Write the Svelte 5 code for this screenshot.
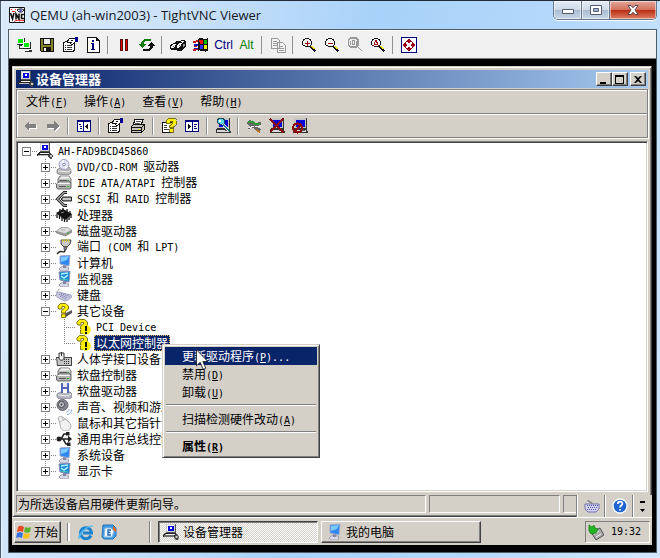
<script>
  const vncTools = [
    ['newconn', 'save', 'options', 'info'],
    ['pause', 'refresh'],
    ['cad', 'winkey', 'Ctrl', 'Alt'],
    ['copy'],
    ['zoomin', 'zoomout', 'zoom100', 'zoomauto'],
    ['fullscreen']
  ];
  const mmcTools = [
    ['back', 'forward'],
    ['treepane'],
    ['options', 'print'],
    ['help', 'actionpane'],
    ['scan'],
    ['update', 'uninstall', 'disable']
  ];
  const menus = [
    ['文件', 'F'],
    ['操作', 'A'],
    ['查看', 'V'],
    ['帮助', 'H']
  ];
  const devices = [
    { icon: 'cd', text: 'DVD/CD-ROM 驱动器' },
    { icon: 'drives', text: 'IDE ATA/ATAPI 控制器' },
    { icon: 'scsi', text: 'SCSI 和 RAID 控制器' },
    { icon: 'cpu', text: '处理器' },
    { icon: 'disk', text: '磁盘驱动器' },
    { icon: 'port', text: '端口 (COM 和 LPT)' },
    { icon: 'screen', text: '计算机' },
    { icon: 'display', text: '监视器' },
    { icon: 'keyboard', text: '键盘' },
    {
      icon: 'unknown',
      text: '其它设备',
      children: [
        { icon: 'problem', text: 'PCI Device' },
        { icon: 'problem', text: '以太网控制器', selected: true }
      ]
    },
    { icon: 'hid', text: '人体学接口设备' },
    { icon: 'drives', text: '软盘控制器' },
    { icon: 'floppy', text: '软盘驱动器' },
    { icon: 'sound', text: '声音、视频和游戏控制器' },
    { icon: 'mouse', text: '鼠标和其它指针设备' },
    { icon: 'usb', text: '通用串行总线控制器' },
    { icon: 'screen', text: '系统设备' },
    { icon: 'display', text: '显示卡' }
  ];
  const actions = [
    { text: '更新驱动程序', key: 'P', more: '...', active: true },
    { text: '禁用', key: 'D' },
    { text: '卸载', key: 'U' },
    null,
    { text: '扫描检测硬件改动', key: 'A' },
    null,
    { text: '属性', key: 'R', bold: true }
  ];

  // Latin runs take a half-width face, as in a Chinese bitmap font
  const runs = (s) => s.match(/[\x20-\x7e]+|[^\x20-\x7e]+/g) ?? [];
  const isLatin = (s) => s.charCodeAt(0) < 127;

  const lens = '<path d="M4 1h4v1h2v2h1v4h-1v1H8v1H4V9H2V8H1V4h1V2h2z" fill="#111"/><path d="M4 2h4v1h1v1h1v4H9v1H4V8H2V4h1V3h1z" fill="#f6f6f6"/><path d="M9 9l5.500 5.500" stroke="#111" stroke-width="2.800"/><path d="M10.500 9l3 3" stroke="#e8e000" stroke-width="1.400"/>';
  const pc = '<path d="M3 0h10v9H3z" fill="#555"/><path d="M3 0h9v8H3z" fill="#d0d0d0"/><path d="M4 1h7v6H4z" fill="#fff"/><path d="M5 2h6v5H5z" fill="#0000e0"/><path d="M7 3h2v2H7z" fill="#fff"/><path d="M2 9h11l1 4H0v-2z" fill="#222"/><path d="M3 10h9l1 1H2z" fill="#f4f4f4"/><path d="M1 12h10" stroke="#bbb"/><path d="M12 10h2l2 3-1 3h-2l-2-2z" fill="#444"/><path d="M12.500 12h2v2h-2z" fill="#ccc"/>';
  const pcBig = '<path d="M2 0h13v11H2z" fill="#333"/><path d="M2 0h12v10H2z" fill="#c4c4c4"/><path d="M4 2h9v7H4z" fill="#0000d8"/><path d="M1 11h14l1 4H1z" fill="#333"/><path d="M2 12h12v2H2z" fill="#d8d8d8"/><path d="M10 12h3v1h-3z" fill="#555"/>';
  const screenBase = '<path d="M5 12l4-1 4 2-1 3H5l-2-2z" fill="#d8d8e4" stroke="#8a8aa2" stroke-width=".7"/><path d="M7 10h3v3H7z" fill="#8686a8"/>';
  const drives = '<path d="M4 1h9l2 3v4H2V4z" fill="#c4c4c4" stroke="#777"/><path d="M5 1.500h8l1 2H4z" fill="#f4f4f4"/><path d="M2 8l1-2h10l2 2v5l-1 1H2L.500 13V9z" fill="#b4b4b4" stroke="#666"/><path d="M2 8h11l1 1H1z" fill="#f6f6f6"/><path d="M4 5.500h7M3 11.500h7" stroke="#555"/><path d="M12 5h1v1h-1zM11 11h2v1h-2z" fill="#19b519"/>';
  const qmark = '<path d="M2 5V3l2.500-2.500h5L12.500 3v3.200L9.500 8.500V10h-4V7.500L8.500 5V3.500H6V6H3z" fill="#ffee00" stroke="#605800" stroke-width=".8"/><path d="M5.500 11h4v3.500h-4z" fill="#ffee00" stroke="#605800" stroke-width=".8"/>';

  const icons = {
    vnc: '<path d="M.5.5h15v15H.5z" fill="#fff" stroke="#111"/><path d="M8 3l2-1h3l2 1-2 2h-3z" fill="#fff" stroke="#111"/><path d="M10.500 2.500h2v2h-2z" fill="#2030c0"/><path d="M2 2h1v1H2zM6 2h1v1H6zM3 4h3v1H3z" fill="#e22"/><path d="M1.500 6l2 6 1.500-6M7 12.500V7l3 5V6.500M15 7.500h-2.500v4H15" fill="none" stroke="#111" stroke-width="1.600"/><path d="M5 14.500c2-2 6-1 10-1" stroke="#e22" fill="none"/>',
    newconn: '<path d="M1 1h8v7H1z" fill="#222"/><path d="M1 1h7v6H1z" fill="#fff"/><path d="M2 2h5v4H2z" fill="#00e800"/><path d="M7 5h8v7H7z" fill="#222"/><path d="M7 5h7v6H7z" fill="#fff"/><path d="M8 6h5v4H8z" fill="#00e800"/><path d="M3 8h3v1H3zM3 11h4v1H3zM3 9h1v2H3zM9 13h7v2H9z" fill="#333"/><path d="M8 13h5v1H8z" fill="#eee"/>',
    save: '<path d="M1 1h14v14H2l-1-1z" fill="#111"/><path d="M2 2h12v12H2z" fill="#84842a"/><path d="M4 1h8v7H4z" fill="#111"/><path d="M5 2h6v5H5z" fill="#eee"/><path d="M4 10h8v4H4z" fill="#111"/><path d="M5 11h2v3H5z" fill="#fff"/>',
    options: '<path d="M1 5h2V4h10v10h-1v1H1z" fill="#111"/><path d="M2 6h1V5h9v8h-1v1H2z" fill="#fff"/><path d="M3 8h1M5 8h5M3 10h1M5 10h5M3 12h1M5 12h5" stroke="#333"/><path d="M5 5l2-3 3-1h3v4l-3 3-2-2z" fill="#fff" stroke="#111"/><path d="M9 3h2M8 5h2" stroke="#111"/><path d="M13 0h3v5h-3z" fill="#000090"/>',
    info: '<path d="M2 0h9l4 4v12H2z" fill="#111"/><path d="M3 1h8v3h3v11H3z" fill="#fff"/><path d="M7 3h2v2H7zM6 6h3v6h1v1H6v-1h1V7H6z" fill="#00007c"/>',
    pause: '<path d="M4 2h3v12H4zM9 2h3v12H9z" fill="#501010"/><path d="M5 3h1v10H5zM10 3h1v10h-1z" fill="#f00000"/><path d="M4.600 3h1.400v10H4.600zM9.600 3H11v10H9.600z" fill="#f00000"/>',
    refresh: '<path d="M12 3H6L3.500 5.500V8" stroke="#127a12" stroke-width="2.200" fill="none"/><path d="M0 7h7l-3.500 4z" fill="#127a12"/><path d="M4 13h6l2.500-2.500V8" stroke="#111" stroke-width="2.200" fill="none"/><path d="M9 9h7l-3.500-4z" fill="#111"/>',
    cad: '<path d="M0 9l1-2 3-1 2-2h4l1-1h3l2 2v4l-3 4-2 1H8l-2-1H2l-2-1z" fill="#111"/><path d="M1 9l2-2h3l-1 3-2 1H1zM7 8l2-2h3l-2 4-2 1H7zM11 4h3l-1 2-2-1z" fill="#f4f4f4"/><path d="M2.500 9h1.500M8.500 8.500h1.500" stroke="#555"/><path d="M13 7h2v2h-1l-1 2z" fill="#999"/>',
    winkey: '<path d="M0 4h3v2H0zM1 9h3v1H1zM0 12h3v2H0zM3 3h3v2H3zM3 12h3v1H3z" fill="#c01414"/><path d="M1 7h4v2H1zM1 11h4v1H1z" fill="#1414c0"/><path d="M5 2c3-2 6 1 10-1v13c-4 2-7-2-10 0z" fill="#111"/><path d="M6 3l4-.5v4L7 7z" fill="#e11"/><path d="M11 3.500l3-.5v4h-3z" fill="#0b0"/><path d="M7 8l3 .5V12l-3-.5z" fill="#33f"/><path d="M11 8h3v4l-3 .3z" fill="#ee0"/>',
    copy: '<path d="M1.500 1.500h6l2 2v8h-8zM7.500 5.500h5l3 3v7h-8z" fill="#f4f4f4" stroke="#999"/><path d="M3 4.500h4M3 6.500h4M3 8.500h4M9 9.500h4M9 11.500h5M9 13.500h5" stroke="#999"/>',
    zoomin: lens + '<path d="M3.500 6h5M6 3.500v5" stroke="#a00018"/>',
    zoomout: lens + '<path d="M3.500 6h5" stroke="#a00018"/>',
    zoom100: '<path d="M4 1h5l2 2v5l-2 2H4L1.500 8V3z" fill="#eee" stroke="#999" stroke-width="1.500"/><path d="M3.500 3.500v4M5.500 3.500h2v4h-2zM9.500 3.500v4M10 9l5 5" stroke="#999" fill="none" stroke-width="1.200"/>',
    zoomauto: lens + '<path d="M3.500 9l2.500-6 2.500 6M4 7h4" stroke="#a00018" fill="none"/>',
    fullscreen: '<path d="M0 0h16v16H0z" fill="#000080"/><path d="M1 1h14v14H1z" fill="#fff"/><path d="M8 1.500L11 5H9v2H7V5H5zM8 14.500L5 11h2V9h2v2h2zM1.500 8L5 5v2h1v2H5v2zM14.500 8L11 11V9h-1V7h1V5z" fill="#a00018"/><path d="M7 6h2v4H7z" fill="#fff"/>',
    back: '<path d="M3 9l5-5v3h7v4H8v3z" fill="#fff"/><path d="M2 8l5-5v3h7v4H7v3z" fill="#808080"/>',
    forward: '<path d="M15 9l-5-5v3H3v4h7v3z" fill="#fff"/><path d="M14 8L9 3v3H2v4h7v3z" fill="#808080"/>',
    treepane: '<path d="M1 2h14v12H1z" fill="#000080"/><path d="M2 4h5v9H2zM8 4h6v9H8z" fill="#fff"/><path d="M3 6.500h2M4 8.500h2M4 10.500h2" stroke="#000080"/><path d="M12 5v7L9 8.500z" fill="#111"/>',
    actionpane: '<path d="M1 2h14v12H1z" fill="#000080"/><path d="M2 4h6v9H2zM9 4h5v9H9z" fill="#fff"/><path d="M10 6.500h3M10 8.500h2M10 10.500h3" stroke="#000080"/><path d="M4 5v7l3-3.500z" fill="#111"/>',
    print: '<path d="M5 1.500h8l-2 6H3z" fill="#fff" stroke="#111"/><path d="M6 3.500h5M5 5.500h5" stroke="#555"/><path d="M1.500 8.500l2-2h11v5l-3 3h-10z" fill="#c6c3b8" stroke="#111"/><path d="M1.500 9.500h10l3-3M11.500 9.500V14M2 12h9" stroke="#111" fill="none"/><path d="M8 11h2v1H8z" fill="#dd0"/>',
    help: '<path d="M1 4h10v11H1z" fill="#111"/><path d="M2 5h8v9H2z" fill="#fff"/><path d="M3 7.500h3M3 9.500h3M3 11.500h5" stroke="#444"/><g transform="translate(3 -.5)">' + qmark + '</g>',
    scan: pcBig + '<path d="M2 2l3-2h3l2 3-1 3-3 1-3-2z" fill="#58d8e8" stroke="#245"/><path d="M4 2h2v2H4z" fill="#fff"/><path d="M8 6l6 7" stroke="#fff" stroke-width="2.600"/><path d="M8.500 6.500l6 7" stroke="#0a7c90" stroke-width="1.400"/>',
    update: '<path d="M0 5l4-3 4 3 7-1v3l-5 1 5 3-2 3-6-4-6 1 3-3z" fill="#666"/><path d="M2 4l4-.5L9 6h5" stroke="#2a9a38" stroke-width="2" fill="none"/><path d="M9 8h6M3 10l5-2" stroke="#eee"/><path d="M10 12l4 2" stroke="#b87020" stroke-width="2"/>',
    uninstall: pcBig + '<path d="M1 1l14 14M14 1L1 14" stroke="#8b0c10" stroke-width="2.600"/>',
    disable: pcBig + '<circle cx="5.500" cy="10" r="4.500" fill="none" stroke="#8b0c10" stroke-width="2.200"/><path d="M3 13l6-6" stroke="#8b0c10" stroke-width="2"/>',
    pc,
    cd: '<path d="M1 11l4-3h8l2 3v3l-3 2H4l-3-2z" fill="#b5b5b5" stroke="#777" stroke-width=".8"/><path d="M2 12l10 1 3-2" stroke="#eee" fill="none"/><circle cx="8" cy="5.500" r="5" fill="#dfe1fa" stroke="#9b9bb4"/><path d="M8 5.500L5 2l3-1zM8 5.500l4 3-3 1.500z" fill="#fff"/><circle cx="8" cy="5.500" r="1.300" fill="#fff" stroke="#88a"/>',
    drives,
    scsi: '<path d="M11 1.500H8L1.500 8 8 14.500h3" fill="none" stroke="#222" stroke-width="3"/><path d="M11 1.500H8L1.500 8 8 14.500h3" fill="none" stroke="#aaa" stroke-width="1.200"/><path d="M7 6h8.500v4H7L5 8z" fill="#888" stroke="#222"/><path d="M7 8h8" stroke="#fff"/>',
    cpu: '<path d="M0 6l7-4 9 5-7 6z" fill="#111"/><path d="M1 7v4M3.500 8v4M6 9v5M8.500 12v3M11 10v5M13 8v5M15 7v4M4 2v3M7 1v3M11 2v3M14 4v3" stroke="#111" stroke-width="1.300"/><path d="M5 6l3-1" stroke="#888"/>',
    disk: '<path d="M.500 8l5-3.500h6l4 2.500v2.500l-6 3.500-9-3z" fill="#999" stroke="#777" stroke-width=".7"/><path d="M.800 8l5-3.300h6L15 7l-6 3.300z" fill="#dedede"/><path d="M5 7h4" stroke="#aaa"/><path d="M11 10h2" stroke="#3b3"/>',
    port: '<path d="M5 1h10l-1 4-3 3H8L5 5z" fill="#c9c9c9" stroke="#444"/><path d="M6 1.500h8" stroke="#e4d000" stroke-width="2" stroke-dasharray="1 1"/><path d="M8 8h3l-1 3H8z" fill="#888" stroke="#333" stroke-width=".7"/><path d="M9 11c0 4-4 0-6 2l-2 2" stroke="#222" stroke-width="1.400" fill="none"/>',
    screen: screenBase + '<path d="M4 1l10-1-1 11-9-2z" fill="#2e87ec" stroke="#a3a8ce"/><path d="M5 2l8-1-2 4-6 2z" fill="#7bcaff"/>',
    display: screenBase + '<path d="M3 1l11-1-1 11-9-2z" fill="#168bd6" stroke="#888bae"/><path d="M5 3l7-1M5 5l3 2 4-3" stroke="#b9f2ff" fill="none" stroke-width="1.500"/><path d="M5 8l7 1" stroke="#44c8c0"/>',
    keyboard: '<path d="M0 6l3-1 12 3 1 2-4 3-4 1-7-4z" fill="#c8c8e2" stroke="#8a8aae" stroke-width=".7"/><path d="M3 7l9 4M5 6.500l9 3M4 9l6 3" stroke="#6a6aa0" stroke-dasharray="1 1"/><path d="M1 5c0-2 2-1 2-3" stroke="#aaa" fill="none"/>',
    unknown: '<path d="M8 11l8-4v3l-3 2-3 2-3-1z" fill="#555"/>' + qmark,
    problem: qmark + '<circle cx="11" cy="11" r="4.800" fill="#ffee00"/><path d="M10 7h2v5h-2zM10 13h2v2h-2z" fill="#111"/>',
    hid: '<path d="M0 6h16v9H1z" fill="#444"/><path d="M1 7h14v7H2z" fill="#c4c4c4"/><path d="M8 8.500h6M8 10.500h6M8 12.500h6" stroke="#333" stroke-dasharray="1 1"/><path d="M3 2v5c0 3 5 3 5 0V2z" fill="#eee" stroke="#333"/><path d="M5.500 1v4" stroke="#333"/>',
    floppy: '<path d="M1 11l4-2h9l2 2v3l-3 2H3l-2-2z" fill="#b5b5c2" stroke="#778" stroke-width=".8"/><path d="M5 0h8v10H5z" fill="#5267b8"/><path d="M7 0h4v4H7z" fill="#e8e8f4"/><path d="M7 6h4v4H7z" fill="#fff"/><path d="M2 12l10 1 3-2" stroke="#eee" fill="none"/>',
    sound: '<circle cx="6.500" cy="6" r="5.500" fill="#85858e" stroke="#66666e"/><circle cx="5.500" cy="5.500" r="3" fill="#c8c8d0" stroke="#44444c"/><circle cx="5.500" cy="5.500" r="1" fill="#333"/><path d="M10 13c2 0 3-1 3-3M11 15.500c3 0 4.500-2 4.500-5" stroke="#90a8e8" fill="none"/>',
    mouse: '<path d="M2 3c1-2 4-2 6 0l5 4c4 4 1 9-3 9S4 13 4 9z" fill="#f1f1f1" stroke="#aaa"/><path d="M4 7c2-2 4-2 6-3M6 2l2 4" stroke="#bbb" fill="none"/>',
    usb: '<circle cx="3" cy="8" r="2.500" fill="#222"/><path d="M3 8h11M5 8l3-5h3M7 8l3 5h2" stroke="#222" stroke-width="1.500" fill="none"/><path d="M12 4.500L16 8l-4 3.500z" fill="#222"/><path d="M10 1h3.500v3.500H10zM11 11.500h3.500V15H11z" fill="#222"/>',
    flag: '<path d="M2 3c2-2 4-1 6 0L7 8C5 7 3 7 1 8z" fill="#ea4c22"/><path d="M9 3c2 1 4 1 6 0l-1 5c-2 1-4 1-6 0z" fill="#59b32c"/><path d="M1 9c2-1 4-1 6 0l-1 5c-2-1-4-1-6 0z" fill="#3373e0"/><path d="M8 9c2 1 4 1 6 0l-1 5c-2 1-4 1-6 0z" fill="#f7c120"/>',
    ie: '<path d="M13 11.500A5.500 5.500 0 1 1 13.500 9H5" fill="none" stroke="#1b84d0" stroke-width="3"/><path d="M1 15c-3-3 7-14 14-13-4 0-10 4-12 9" fill="#57b8f2" stroke="#57b8f2" stroke-width=".8"/>',
    outlook: '<path d="M2 1h10l3 3v8l-3 3H3l-2-2z" fill="#3f9be6" stroke="#2272b8"/><path d="M4 4h6l3 3-2 6H3z" fill="#f2f9ff" stroke="#88b8e0"/><path d="M10 6H7v5h3M7 8.500h2.500" stroke="#1b66b0" fill="none" stroke-width="1.300"/><path d="M12 2l3 3v3l-3-2z" fill="#e86820"/>',
    blueHelp: '<circle cx="8" cy="8" r="7.800" fill="#f5f9ff"/><circle cx="8" cy="8" r="6.300" fill="#1f64d0"/><path d="M5.800 6c0-3 4.600-3 4.600-.3C10.400 7.500 8 7.500 8 9.500M8 11v1.600" stroke="#fff" stroke-width="1.700" fill="none"/>',
    imeKeys: '<path d="M1 6h14v5l-3 3H4l-3-3z" fill="#d4d4f6" stroke="#7474a8"/><path d="M3 7.500h11M4 9.500h9M3 11.500h9" stroke="#5050a0" stroke-dasharray="1 1"/><path d="M8 6c0-3-4-1-4-4" stroke="#888" stroke-width="1.500" fill="none"/>',
    tray: '<path d="M3 8l9-4 4 7-8 5z" fill="#a9a9a9" stroke="#555"/><path d="M6 10l5-3M8 13l5-3" stroke="#eee"/><path d="M1 1l3 2 2-2 1 3 3 1-2 4-5 1-2-3z" fill="#22b622" stroke="#127a12" stroke-width=".7"/>'
  };
</script>

{#snippet icon(name)}
  <svg class="icon" viewBox="0 0 16 16" aria-hidden="true">{@html icons[name]}</svg>
{/snippet}

{#snippet label(text)}{#each runs(text) as r}{#if isLatin(r)}<span class="lat">{r}</span>{:else}{r}{/if}{/each}{/snippet}

{#snippet mnemonic(text, key, more = '')}{text}<span class="lat">(<u>{key}</u>){more}</span>{/snippet}

{#snippet toolbar(groups)}
  {#each groups as group, i}
    {#if i}<span class="sep"></span>{/if}
    {#each group as name}
      <button class="tool" aria-label={name}>
        {#if icons[name]}{@render icon(name)}{:else}<span class={name.toLowerCase()}>{name}</span>{/if}
      </button>
    {/each}
  {/each}
{/snippet}

{#snippet node(item, depth, last)}
  <li class:last role="treeitem" aria-selected={!!item.selected}>
    <div class="row">
      <span class="branch">
        {#if depth === 1}
          <button class="expander" class:open={item.children} aria-label="展开"></button>
        {/if}
      </span>
      {@render icon(item.icon)}
      <span class="name" class:selected={item.selected}>{@render label(item.text)}</span>
      {#if item.selected}{@render contextMenu()}{/if}
    </div>
    {#if item.children}
      <ul role="group">
        {#each item.children as child, i}{@render node(child, depth + 1, i === item.children.length - 1)}{/each}
      </ul>
    {/if}
  </li>
{/snippet}

{#snippet contextMenu()}
  <div class="context" role="menu">
    {#each actions as a}
      {#if a}
        <button role="menuitem" class:active={a.active} class:bold={a.bold}>{@render mnemonic(a.text, a.key, a.more)}</button>
      {:else}
        <hr />
      {/if}
    {/each}
    <svg class="pointer" viewBox="0 0 12 21" aria-hidden="true">
      <path d="M.5.8v16l3.700-3.500 3 7 2.600-1.100-3-6.700h5z" fill="#fff" stroke="#111" stroke-width=".8" />
    </svg>
  </div>
{/snippet}

<div class="aero">
  <header class="caption">
    {@render icon('vnc')}
    <h1>QEMU (ah-win2003) - TightVNC Viewer</h1>
    <div class="glass">
      <button aria-label="最小化"><svg viewBox="0 0 14 12"><path d="M1.500 5.500h11v4h-11z" fill="#fff" stroke="#555b70" /></svg></button>
      <button aria-label="最大化"><svg viewBox="0 0 14 12"><path d="M1.500 1.500h11v9h-11z" fill="#fff" stroke="#555b70" /><path d="M4.500 4.500h5v3h-5z" fill="#9fb8d2" stroke="#555b70" /></svg></button>
      <button class="close" aria-label="关闭"><svg viewBox="0 0 14 12"><path d="M2 1.500h3l2 2.300 2-2.300h3L9 6l3 4.500H9L7 8.200 5 10.500H2L5 6z" fill="#fff" stroke="#5a4452" /></svg></button>
    </div>
  </header>

  <div class="client">
    <nav class="vncbar">{@render toolbar(vncTools)}</nav>

    <main class="desktop">
      <section class="mmc">
        <header class="title">
          {@render icon('pc')}
          <h2>设备管理器</h2>
          <button aria-label="最小化"><svg viewBox="0 0 12 10"><path d="M2 7h6v2H2z" /></svg></button>
          <button aria-label="最大化"><svg viewBox="0 0 12 10"><path d="M1 0h9v9H1zM2 2v6h7V2z" fill-rule="evenodd" /></svg></button>
          <button class="x" aria-label="关闭"><svg viewBox="0 0 12 10"><path d="M2 1h2l2 2 2-2h2L7 4.500 10 8H8L6 6 4 8H2l3-3.500z" /></svg></button>
        </header>
        <nav class="menubar">
          {#each menus as [text, key]}<button>{@render mnemonic(text, key)}</button>{/each}
        </nav>
        <nav class="mmcbar">{@render toolbar(mmcTools)}</nav>
        <div class="tree">
          <div class="row root">
            <span class="branch"><button class="expander open" aria-label="折叠"></button></span>
            {@render icon('pc')}
            <span class="name">{@render label('AH-FAD9BCD45860')}</span>
          </div>
          <ul role="tree">
            {#each devices as d, i}{@render node(d, 1, i === devices.length - 1)}{/each}
          </ul>
        </div>
        <footer class="status">
          <span class="hint">为所选设备启用硬件更新向导。</span>
          <span class="middle"></span>
          <span class="end"></span>
        </footer>
        <div class="langbar">
          <button aria-label="键盘">{@render icon('imeKeys')}</button>
          <button aria-label="帮助">{@render icon('blueHelp')}</button>
          <button class="opts" aria-label="选项"><svg viewBox="0 0 6 12"><path d="M0 1h5v2H0zM0 9h5L2.500 12z" /></svg></button>
        </div>
      </section>

      <footer class="taskbar">
        <button class="start">{@render icon('flag')}开始</button>
        <div class="quick">
          <button aria-label="Internet Explorer">{@render icon('ie')}</button>
          <button aria-label="Outlook Express">{@render icon('outlook')}</button>
        </div>
        <div class="tasks">
          <button class="task pressed">{@render icon('pc')}设备管理器</button>
          <button class="task">{@render icon('screen')}我的电脑</button>
        </div>
        <div class="tray">{@render icon('tray')}<time class="lat">19:32</time></div>
      </footer>
    </main>
  </div>
</div>

<style>
  :global(body) { margin: 0; }

  .aero {
    --face: #d4d0c8;
    box-sizing: border-box;
    display: flex;
    flex-direction: column;
    min-height: 100vh;
    padding: 0 3px 5px 8px;
    border-top: 1px solid #222a38;
    background:
      linear-gradient(90deg, #4a5a70 0 1px, #e8f4ff 1px 2px, transparent 2px),
      linear-gradient(100deg, #dcebfa 0, #c9e1f9 25%, #a8d2f9 50%, #b4d8fa 75%, #d3e8fc 100%);
    font: 12px/16px "Noto Sans CJK SC", sans-serif;
    color: #000;
  }
  button { margin: 0; padding: 0; border: 0; background: none; font: inherit; color: inherit; }
  h1, h2 { margin: 0; }
  ul { margin: 0; padding: 0; list-style: none; }
  .icon { flex: none; display: block; width: 16px; height: 16px; }
  .lat { font-family: "DejaVu Sans Mono", monospace; font-size: 10px; white-space: pre; }

  .caption { display: flex; align-items: center; height: 28px; }
  .caption .icon { margin-left: 1px; }
  .caption h1 { flex: 1; margin-left: 5px; font: 13px/20px "Open Sans", sans-serif; color: #15191f; white-space: nowrap; }
  .glass {
    align-self: flex-start;
    display: flex;
    height: 18px;
    border: 1px solid #68788c;
    border-top: 0;
    border-radius: 0 0 5px 5px;
    overflow: hidden;
    box-shadow: 0 1px 1px #fff;
  }
  .glass button {
    display: grid;
    place-items: center;
    width: 28px;
    border-right: 1px solid #68788c;
    background: linear-gradient(#e6edf5 0, #cdd9e6 48%, #a9bbcf 50%, #c8d8e8 100%);
    box-shadow: inset 0 0 0 1px #ffffff80;
  }
  .glass .close { width: 46px; border: 0; background: linear-gradient(#e4a899 0, #d2705c 48%, #b92a12 50%, #dd8064 100%); }
  .glass svg { width: 14px; height: 12px; }

  .client { flex: 1; display: flex; flex-direction: column; border: 1px solid #4e5e68; }
  .vncbar { display: flex; align-items: center; height: 27px; padding-left: 3px; border-top: 1px solid #fff; border-bottom: 1px solid #777; background: #f0f0f0; }
  .tool { display: grid; place-items: center; width: 23px; height: 22px; }
  .tool .icon, .row .icon, .title .icon { shape-rendering: crispEdges; }
  .tree ul .icon { shape-rendering: auto; }
  .tool span { font: 12px/16px "Liberation Sans", sans-serif; }
  .tool .ctrl { color: #000080; }
  .tool .alt { color: #008000; }
  .sep { width: 4px; height: 18px; margin-left: 3px; border-left: 1px solid #909090; }

  .desktop { flex: 1; display: flex; flex-direction: column; padding: 7px 4px 7px 3px; background: #000; }
  .mmc {
    position: relative;
    flex: 1;
    display: flex;
    flex-direction: column;
    padding: 3px;
    border: 1px solid;
    border-color: var(--face) #404040 #404040 var(--face);
    background: var(--face);
    box-shadow: inset 1px 1px #fff, inset -1px -1px #808080;
  }
  .title { display: flex; align-items: center; height: 18px; padding: 0 2px; background: linear-gradient(90deg, #0a246a, #a6caf0); }
  .title h2 { flex: 1; margin-left: 2px; color: #fff; font-size: 13px; line-height: 18px; }
  .title button {
    width: 16px;
    height: 14px;
    box-sizing: border-box;
    border: 1px solid;
    border-color: #fff #404040 #404040 #fff;
    background: var(--face);
    box-shadow: inset -1px -1px #808080;
  }
  .title .x { margin-left: 2px; }
  .title button svg { display: block; width: 12px; height: 10px; margin-left: 1px; margin-top: 1px; }

  .menubar, .mmcbar { display: flex; align-items: center; height: 23px; border: 1px solid #808080; box-shadow: inset 1px 1px #fff, 1px 1px #fff; }
  .menubar { margin-top: 1px; padding-left: 1px; }
  .menubar button { padding: 0 8px; }
  .mmcbar { padding-left: 1px; border-top: 0; }
  .mmcbar .sep { box-shadow: inset 1px 0 #fff; }

  .tree {
    flex: 1;
    margin-top: 3px;
    padding: 1px 0 8px 5px;
    border: 1px solid;
    border-color: #808080 #fff #fff #808080;
    box-shadow: inset 1px 1px #404040, inset -1px -1px var(--face);
    background: #fff;
  }
  .tree ul { padding-left: 19px; }
  .tree > ul > li:not(.last) { background: repeating-linear-gradient(#808080 0 1px, transparent 1px 2px) 4px 0 / 1px 100% no-repeat; }
  .row { position: relative; display: flex; align-items: center; height: 16px; }
  .branch {
    flex: none;
    display: flex;
    align-items: center;
    width: 15px;
    height: 16px;
    background:
      repeating-linear-gradient(90deg, #808080 0 1px, transparent 1px 2px) 4px 8px / 11px 1px no-repeat,
      repeating-linear-gradient(#808080 0 1px, transparent 1px 2px) 4px 0 / 1px 100% no-repeat;
  }
  .root .branch { background: repeating-linear-gradient(90deg, #808080 0 1px, transparent 1px 2px) 4px 8px / 11px 1px no-repeat; }
  .last > .row > .branch { background-size: 11px 1px, 1px 8px; }
  .expander {
    width: 9px;
    height: 9px;
    border: 1px solid #808080;
    background:
      linear-gradient(#000, #000) center / 5px 1px no-repeat,
      linear-gradient(#000, #000) center / 1px 5px no-repeat,
      #fff;
  }
  .expander.open { background: linear-gradient(#000, #000) center / 5px 1px no-repeat, #fff; }
  .name { margin-left: 3px; padding: 0 2px; white-space: nowrap; }
  .selected { background: #0a246a; color: #fff; outline: 1px dotted #e8c060; outline-offset: -1px; }

  .context {
    position: absolute;
    z-index: 2;
    left: 102px;
    top: 9px;
    display: flex;
    flex-direction: column;
    width: 152px;
    padding: 2px;
    border: 1px solid;
    border-color: var(--face) #404040 #404040 var(--face);
    background: var(--face);
    box-shadow: inset 1px 1px #fff, inset -1px -1px #808080;
  }
  .context button { height: 18px; padding-left: 17px; text-align: left; line-height: 18px; white-space: nowrap; }
  .context .active { background: #0a246a; color: #fff; }
  .context .bold { font-weight: bold; }
  .context hr { align-self: stretch; height: 1px; margin: 3px 1px 4px; border: 0; border-top: 1px solid #808080; background: #fff; }
  .pointer { position: absolute; left: 33px; top: 4px; width: 12px; height: 21px; }

  .status { display: flex; gap: 3px; height: 18px; margin: 3px 71px 0 0; }
  .status span { box-sizing: border-box; border: 1px solid; border-color: #808080 #fff #fff #808080; white-space: nowrap; }
  .hint { flex: 1; padding-left: 1px; }
  .middle { width: 131px; }
  .end { width: 14px; }
  .langbar { position: absolute; right: -1px; bottom: -1px; display: flex; height: 22px; border-left: 1px solid #fff; background: var(--face); box-shadow: -1px 0 #808080; }
  .langbar button { display: grid; place-items: center; width: 28px; border-right: 1px solid #fff; box-shadow: inset -1px 0 #808080; }
  .langbar .opts { width: 18px; border: 0; box-shadow: none; }
  .langbar .opts svg { width: 6px; height: 12px; }

  .taskbar { display: flex; align-items: center; height: 27px; padding: 0 2px; border-top: 1px solid #fff; background: var(--face); box-shadow: 0 -1px var(--face); }
  .start, .task {
    display: flex;
    align-items: center;
    box-sizing: border-box;
    height: 22px;
    border: 1px solid;
    border-color: #fff #404040 #404040 #fff;
    box-shadow: inset -1px -1px #808080;
  }
  .start { width: 47px; padding-left: 1px; gap: 2px; }
  .quick { display: flex; gap: 7px; margin-left: 7px; padding-left: 8px; border-left: 2px solid #fff; box-shadow: -1px 0 #808080; height: 18px; align-items: center; }
  .tasks { flex: 1; display: flex; gap: 3px; margin-left: 33px; padding-left: 7px; border-left: 1px solid #fff; box-shadow: -1px 0 #808080; }
  .task { width: 160px; padding-left: 4px; gap: 4px; }
  .pressed { border-color: #404040 #fff #fff #404040; box-shadow: inset 1px 1px #808080; background: repeating-conic-gradient(#fff 0 25%, #d4d0c8 0 50%) 0 0 / 2px 2px; }
  .tray { display: flex; align-items: center; gap: 7px; box-sizing: border-box; height: 22px; padding: 0 8px 0 2px; border: 1px solid; border-color: #808080 #fff #fff #808080; }
</style>
